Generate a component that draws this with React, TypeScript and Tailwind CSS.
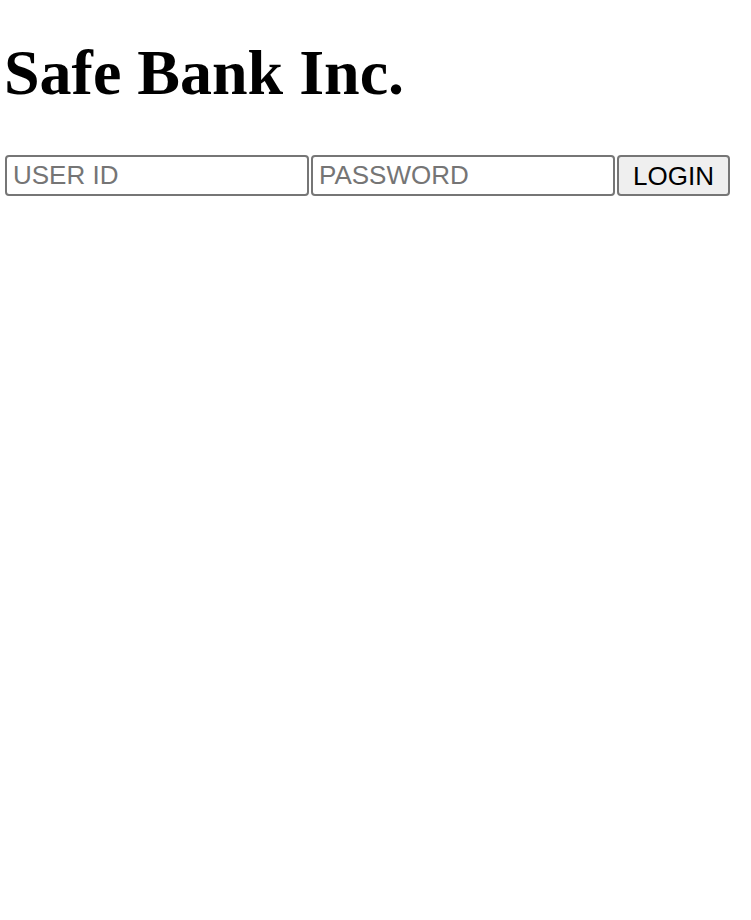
export default function App() {
  return (
    <div className="min-h-screen bg-white px-[4px]">
      <h1
        className="pt-[36px] text-[64px] font-bold text-black"
        style={{ fontFamily: '"Liberation Serif", "Times New Roman", serif', lineHeight: "normal" }}
      >
        Safe Bank Inc.
      </h1>
      <form
        className="mt-[45px] flex items-center gap-[2px] pl-[1px]"
        style={{ fontFamily: '"Liberation Sans", Arial, sans-serif' }}
        onSubmit={(e) => e.preventDefault()}
      >
        <input
          type="text"
          placeholder="USER ID"
          className="h-[41px] w-[304px] rounded-[4px] border-2 border-[#767676] bg-white px-[6px] text-[26px] text-black placeholder:text-[#757575]"
        />
        <input
          type="password"
          placeholder="PASSWORD"
          className="h-[41px] w-[304px] rounded-[4px] border-2 border-[#767676] bg-white px-[6px] text-[26px] text-black placeholder:text-[#757575]"
        />
        <button
          type="submit"
          className="h-[41px] w-[113px] rounded-[4px] border-2 border-[#767676] bg-[#efefef] text-[26px] text-black"
        >
          LOGIN
        </button>
      </form>
    </div>
  );
}
